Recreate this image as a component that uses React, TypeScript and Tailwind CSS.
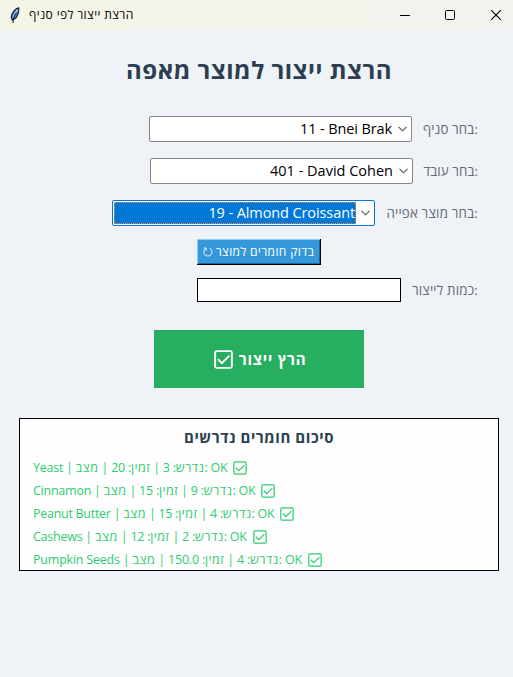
import React from "react";

const FONT = "font-['Open_Sans','Noto_Sans','DejaVu_Sans',sans-serif]";

function Chevron() {
  return (
    <svg className="h-[6px] w-[9px] shrink-0" viewBox="0 0 9 6" fill="none" stroke="#555" strokeWidth="1.1">
      <path d="M0.5 0.8 4.5 4.8 8.5 0.8" />
    </svg>
  );
}

function CheckBox({ className, stroke }: { className: string; stroke: number }) {
  return (
    <svg className={className} viewBox="0 0 15 15" fill="none" stroke="currentColor" strokeWidth={stroke}>
      <rect x="0.9" y="0.9" width="13.2" height="13.2" rx="1.2" />
      <path d="M3 7.2 6.2 10.4 12.2 4.4" />
    </svg>
  );
}

function Label({ text, className }: { text: string; className: string }) {
  return (
    <span className={`flex shrink-0 justify-end whitespace-nowrap text-[13.3px] leading-[20px] text-[#5f6b76] ${className}`}>
      <span>{text}</span>
    </span>
  );
}

function Select({ value, className }: { value: string; className: string }) {
  return (
    <div className="flex h-[26px] w-[263px] items-center justify-end rounded-[2px] border border-[#868686] bg-white pr-[4px]">
      <span className={`mr-[6px] whitespace-nowrap text-[14.5px] leading-[20px] text-black ${className}`}>{value}</span>
      <Chevron />
    </div>
  );
}

function Word({ children }: { children: string }) {
  return <span className="tracking-[0.5px]">{children}</span>;
}

const materials = [
  { name: "Yeast", need: "3", have: "20", cls: "tracking-[-0.25px]" },
  { name: "Cinnamon", need: "9", have: "15", cls: "tracking-[-0.25px]" },
  { name: "Peanut Butter", need: "4", have: "15", cls: "tracking-[-0.28px]" },
  { name: "Cashews", need: "2", have: "12", cls: "tracking-[-0.25px]" },
  { name: "Pumpkin Seeds", need: "4", have: "150.0", cls: "tracking-[-0.21px]" },
];

export default function App() {
  return (
    <div className={`flex h-[677px] w-[513px] flex-col overflow-hidden bg-[#eff3f8] ${FONT}`}>
      <header className="flex h-[30px] shrink-0 items-center rounded-tl-[6px] bg-linear-to-r from-[#f4f4e7] to-[#f3f2ee] pl-[10px]">
        <svg className="h-[17px] w-[10px]" viewBox="0 0 10 17">
          <path d="M8.8 0.8C5.2 1.4 2 5.4 1.2 10.4L2.4 13.2 5.8 11.2C8 8 9.2 4.5 8.8 0.8Z" fill="#4584cf" stroke="#172130" strokeWidth="1.1" />
          <path d="M7.5 2.8C6.2 4.5 4 7.6 3.1 10.4" stroke="#b9dcff" strokeWidth="1.3" fill="none" />
          <path d="M6.5 5.4C4.4 8.4 3.1 11.4 3 16" stroke="#111" strokeWidth="1" fill="none" />
        </svg>
        <span className="ml-[9px] whitespace-nowrap text-[12px] leading-[18px] tracking-[0.4px] text-black">הרצת ייצור לפי סניף</span>
        <div className="ml-auto mr-[12px] flex h-[11px] items-center text-black">
          <svg className="h-[11px] w-[10px]" viewBox="0 0 10 11"><path d="M0 5.5H10" stroke="currentColor" /></svg>
          <svg className="ml-[35px] h-[10px] w-[10px]" viewBox="0 0 10 10"><rect x="0.5" y="0.5" width="9" height="9" rx="1" fill="none" stroke="currentColor" /></svg>
          <svg className="ml-[36px] h-[10px] w-[10px]" viewBox="0 0 10 10"><path d="M0 0 10 10M10 0 0 10" stroke="currentColor" strokeWidth="1.1" /></svg>
        </div>
      </header>

      <h1 className="mt-[22px] h-[36px] shrink-0 whitespace-nowrap pl-[5px] text-center text-[24px] font-bold leading-[36px] tracking-[0.52px] text-[#2c3e50]">
        הרצת ייצור למוצר מאפה
      </h1>

      <form className="mt-[28px] flex shrink-0 flex-col pr-[35px]">
        <div className="flex h-[26px] items-center justify-end">
          <Select value="11 - Bnei Brak" className="tracking-[-0.12px]" />
          <Label text="בחר סניף:" className="w-[66px] tracking-[0.12px]" />
        </div>
        <div className="mt-[16px] flex h-[26px] items-center justify-end">
          <Select value="401 - David Cohen" className="" />
          <Label text="בחר עובד:" className="w-[65px] tracking-[0.08px]" />
        </div>
        <div className="mt-[16px] flex h-[26px] items-center justify-end">
          <div className="flex h-[26px] w-[263px] items-center rounded-[2px] border border-[#0078d7] bg-white pl-px pr-[4px]">
            <div className="flex h-[22px] w-[242px] items-center justify-end border border-dotted border-[#ff8728] bg-[#0078d7]">
              <span className="whitespace-nowrap text-[14.5px] leading-[20px] tracking-[-0.1px] text-white">19 - Almond Croissant</span>
            </div>
            <span className="ml-auto flex"><Chevron /></span>
          </div>
          <Label text="בחר מוצר אפייה:" className="w-[103px] tracking-[0.2px]" />
        </div>
        <button type="button" className="ml-[197px] mt-[13px] flex h-[26px] w-[124px] items-center justify-center gap-[3px] border-b border-r border-black bg-[#3498db] text-white shadow-[inset_1px_1px_0_#8fccf8,inset_-1px_-1px_0_#20648f]">
          <svg className="h-[10px] w-[10px]" viewBox="0 0 10 10" fill="none" stroke="currentColor">
            <path d="M6.6 1.2A4.1 4.1 0 1 1 2.6 1.6M0.6 1.1H3.2V3.8" strokeWidth="0.9" />
          </svg>
          <span className="whitespace-nowrap text-[12px] leading-[18px] tracking-[0.38px]">בדוק חומרים למוצר</span>
        </button>
        <div className="mt-[13px] flex h-[24px] items-center justify-end">
          <div className="h-[24px] w-[204px] border border-black bg-white" />
          <Label text="כמות לייצור:" className="w-[77px] tracking-[0.2px]" />
        </div>
      </form>

      <button type="button" className="ml-[154px] mt-[28px] flex h-[58px] w-[210px] shrink-0 items-center justify-center gap-[6px] bg-[#27ae60] pl-[2px] text-white">
        <CheckBox className="h-[19px] w-[19px]" stroke={1.5} />
        <span className="whitespace-nowrap text-[15px] font-bold leading-[22px] tracking-[0.75px]">הרץ ייצור</span>
      </button>

      <section className="ml-[19px] mt-[30px] flex h-[153px] w-[480px] shrink-0 flex-col border border-black bg-[#fefefe]">
        <h2 className="mt-[7px] h-[22px] whitespace-nowrap text-center text-[15px] font-bold leading-[22px] tracking-[0.58px] text-[#2c3e50]">סיכום חומרים נדרשים</h2>
        <ul className="mt-[8px] flex flex-col pl-[13px]">
          {materials.map((m) => (
            <li key={m.name} className="flex h-[23px] items-center gap-[6px] text-[#2ecc71]">
              <span className={`whitespace-nowrap text-[12.5px] leading-[18px] ${m.cls}`}>
                {m.name} | <Word>נדרש</Word>: {m.need} | <Word>זמין</Word>: {m.have} | <Word>מצב</Word>: OK
              </span>
              <CheckBox className="h-[14px] w-[14px]" stroke={1.3} />
            </li>
          ))}
        </ul>
      </section>
    </div>
  );
}
